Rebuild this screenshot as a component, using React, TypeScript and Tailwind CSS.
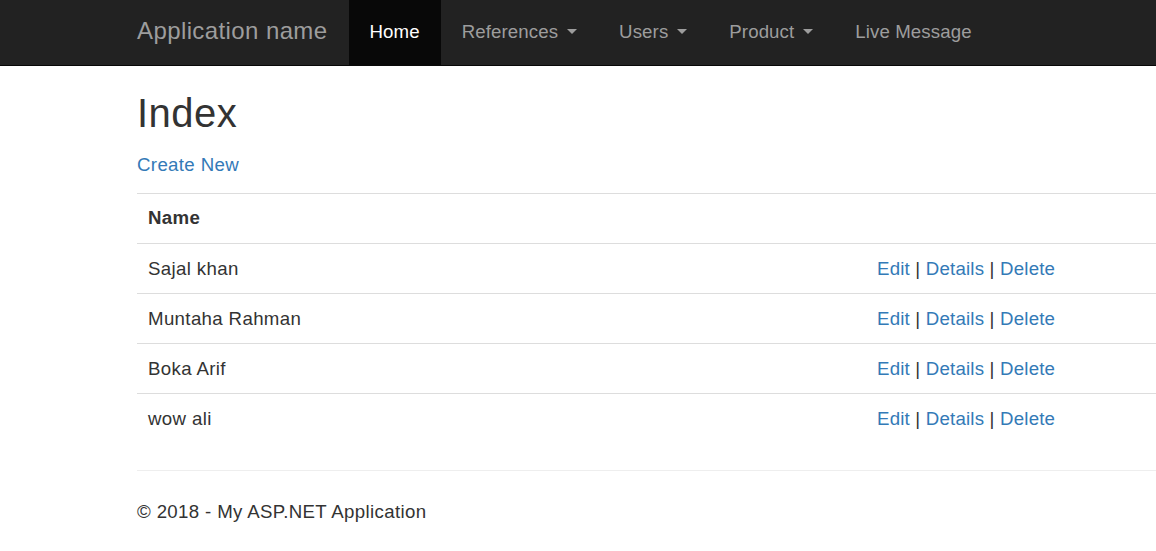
const people = ["Sajal khan", "Muntaha Rahman", "Boka Arif", "wow ali"];

function Caret() {
  return (
    <span className="ml-[9px] inline-block h-0 w-0 border-x-[5.3px] border-t-[5.3px] border-x-transparent border-t-[#9d9d9d] align-middle" />
  );
}

function NavItem({ label, caret, active }: { label: string; caret?: boolean; active?: boolean }) {
  return (
    <a
      href="#"
      className={
        "flex h-[65px] items-start px-[21px] pt-[18px] leading-[27px] tracking-[0.1px] " +
        (active ? "bg-[#080808] text-white" : "text-[#9d9d9d]")
      }
    >
      {label}
      {caret && <span className="flex h-[27px] items-center"><Caret /></span>}
    </a>
  );
}

export default function App() {
  return (
    <div className="min-h-screen bg-white font-['Liberation_Sans',Arial,sans-serif] text-[18.67px] leading-[26.67px] tracking-[0.35px] text-[#333]">
      {/* Navbar */}
      <div className="border-b border-[#080808] bg-[#222]">
        <div className="flex h-[65px] pl-[137px]">
          <a href="#" className="pr-[21px] pt-[17px] text-[24px] leading-[27px] tracking-[0.4px] text-[#9d9d9d]">
            Application name
          </a>
          <NavItem label="Home" active />
          <NavItem label="References" caret />
          <NavItem label="Users" caret />
          <NavItem label="Product" caret />
          <NavItem label="Live Message" />
        </div>
      </div>

      <div className="pl-[137px]">
        <h2 className="mt-[25px] text-[40px] leading-[44px] font-normal tracking-[0.5px]">Index</h2>
        <p className="mt-[17px] mb-[14px]">
          <a href="#" className="text-[#337ab7]">Create New</a>
        </p>

        <div className="border-b border-transparent">
          <div className="flex h-[50px] items-center border-t border-[#ddd] px-[11px] pt-[1px] font-bold">Name</div>
          {people.map((name) => (
            <div key={name} className="flex h-[50px] items-center border-t border-[#ddd] pt-[2px]">
              <div className="w-[729px] px-[11px]">{name}</div>
              <div className="px-[11px] tracking-[0.2px]">
                <a href="#" className="text-[#337ab7]">Edit</a> |{" "}
                <a href="#" className="text-[#337ab7]">Details</a> |{" "}
                <a href="#" className="text-[#337ab7]">Delete</a>
              </div>
            </div>
          ))}
        </div>

        <hr className="mt-[26px] border-t border-[#eee]" />
        <footer className="mt-[28px]">
          <p>© 2018 - My ASP.NET Application</p>
        </footer>
      </div>
    </div>
  );
}
